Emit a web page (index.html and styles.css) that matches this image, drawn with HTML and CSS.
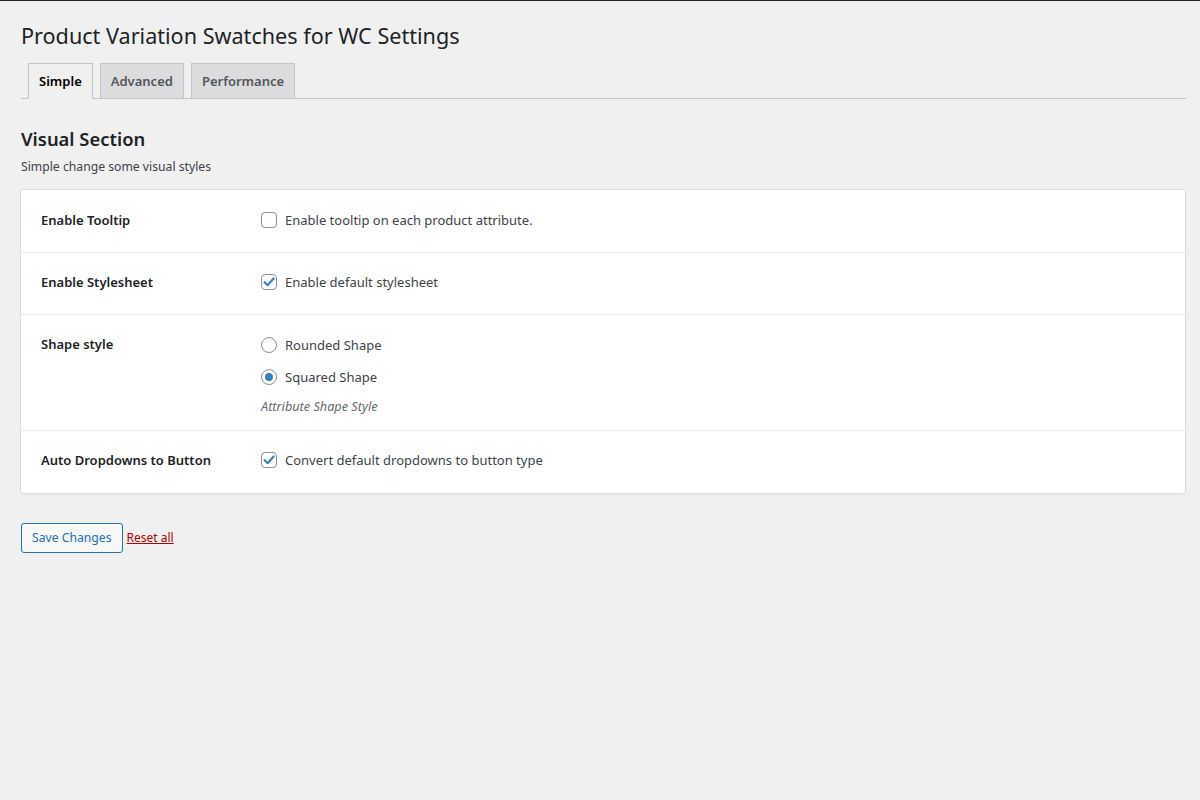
FILE: index.html
```html
<!DOCTYPE html>
<html>
<head>
<meta charset="utf-8">
<link rel="stylesheet" href="styles.css">
</head>
<body>
<div class="topbar"></div>
<div class="wrap">
  <h1 class="page-title">Product Variation Swatches for WC Settings</h1>
  <nav class="tabs">
    <a class="tab active">Simple</a>
    <a class="tab">Advanced</a>
    <a class="tab">Performance</a>
  </nav>
  <h2 class="section-title">Visual Section</h2>
  <p class="section-desc">Simple change some visual styles</p>
  <div class="card">
    <div class="row">
      <div class="label">Enable Tooltip</div>
      <div class="field">
        <label class="opt"><span class="check"></span>Enable tooltip on each product attribute.</label>
      </div>
    </div>
    <div class="row">
      <div class="label">Enable Stylesheet</div>
      <div class="field">
        <label class="opt"><span class="check checked"><svg viewBox="0 0 16 16" width="16" height="16"><path d="M3.6 8.2 L6.6 11.2 L12.6 4.4" fill="none" stroke="#3582c4" stroke-width="2.2" stroke-linecap="round" stroke-linejoin="round"/></svg></span>Enable default stylesheet</label>
      </div>
    </div>
    <div class="row">
      <div class="label">Shape style</div>
      <div class="field radios">
        <label class="opt"><span class="radio"></span>Rounded Shape</label>
        <label class="opt"><span class="radio on"></span>Squared Shape</label>
        <p class="hint">Attribute Shape Style</p>
      </div>
    </div>
    <div class="row">
      <div class="label">Auto Dropdowns to Button</div>
      <div class="field">
        <label class="opt"><span class="check checked"><svg viewBox="0 0 16 16" width="16" height="16"><path d="M3.6 8.2 L6.6 11.2 L12.6 4.4" fill="none" stroke="#3582c4" stroke-width="2.2" stroke-linecap="round" stroke-linejoin="round"/></svg></span>Convert default dropdowns to button type</label>
      </div>
    </div>
  </div>
  <div class="actions">
    <button class="btn">Save Changes</button>
    <a class="reset">Reset all</a>
  </div>
</div>
</body>
</html>
```

FILE: styles.css
```css
* { box-sizing: border-box; }
html, body { margin: 0; padding: 0; }
body {
  background: #f0f0f1;
  color: #3c434a;
  font-family: "Noto Sans", "Open Sans", sans-serif;
  font-size: 13px;
  line-height: 1.4;
  min-height: 800px;
}
.topbar { height: 1px; background: #1d2327; }
.wrap { padding: 0 14px 0 21px; }
.page-title {
  margin: 0;
  padding: 20px 0 0;
  font-size: 21.6px;
  font-weight: 400;
  line-height: 30px;
  color: #1d2327;
}
.tabs {
  display: flex;
  margin-top: 12px;
  padding-left: 7px;
  border-bottom: 1px solid #c3c4c7;
  gap: 7px;
}
.tab {
  display: block;
  padding: 0 10px;
  height: 36px;
  line-height: 34px;
  font-size: 13px;
  font-weight: 600;
  color: #50575e;
  background: #dcdcde;
  border: 1px solid #c3c4c7;
  margin-bottom: -1px;
}
.tab.active {
  background: #f0f0f1;
  color: #000;
  border-bottom-color: #f0f0f1;
}
.section-title {
  margin: 26px 0 0;
  font-size: 18.4px;
  font-weight: 600;
  line-height: 27px;
  color: #1d2327;
}
.section-desc {
  margin: 6px 0 0;
  font-size: 12.2px;
  line-height: 18px;
  color: #3c434a;
}
.card {
  margin: 13px 0 0 -1px;
  background: #fff;
  border: 1px solid #dcdcde;
  border-radius: 3px;
  box-shadow: 0 1px 1px rgba(0,0,0,0.04);
}
.row {
  display: flex;
  padding: 0 20px;
  border-top: 1px solid #ececec;
}
.row:first-child { border-top: none; }
.row:first-child .label, .row:first-child .field { padding-top: 21px; }
.row:last-child .label, .row:last-child .field { padding-bottom: 24px; }
.label {
  width: 220px;
  flex: none;
  padding: 20px 0 23px;
  font-weight: 600;
  color: #1d2327;
  font-size: 13px;
  line-height: 18px;
}
.field {
  padding: 20px 0 23px;
  flex: 1;
  display: flex;
  flex-direction: column;
}
.opt {
  display: flex;
  align-items: center;
  gap: 8px;
  height: 18px;
  font-size: 13px;
  color: #3c434a;
}
.radios { padding-bottom: 16px; }
.radios .opt { margin-top: 1px; }
.radios .opt + .opt { margin-top: 14px; }
.check, .radio {
  width: 16px;
  height: 16px;
  flex: none;
  border: 1px solid #8c8f94;
  background: #fff;
  display: inline-flex;
  align-items: center;
  justify-content: center;
}
.check { border-radius: 4px; }
.check svg { display: block; margin: -1px; }
.radio { border-radius: 50%; }
.radio.on::after {
  content: "";
  width: 8px;
  height: 8px;
  border-radius: 50%;
  background: #3582c4;
}
.hint {
  margin: 12px 0 0;
  font-style: italic;
  font-size: 12.7px;
  line-height: 16px;
  color: #646970;
}
.actions {
  display: flex;
  align-items: center;
  gap: 4px;
  margin-top: 29px;
}
.btn {
  font-family: inherit;
  font-size: 12.2px;
  height: 30px;
  padding: 0 10px;
  color: #2271b1;
  background: #f6f7f7;
  border: 1px solid #2271b1;
  border-radius: 3px;
  line-height: 28px;
}
.reset {
  color: #b70000;
  text-decoration: underline;
  font-size: 12px;
}
```
